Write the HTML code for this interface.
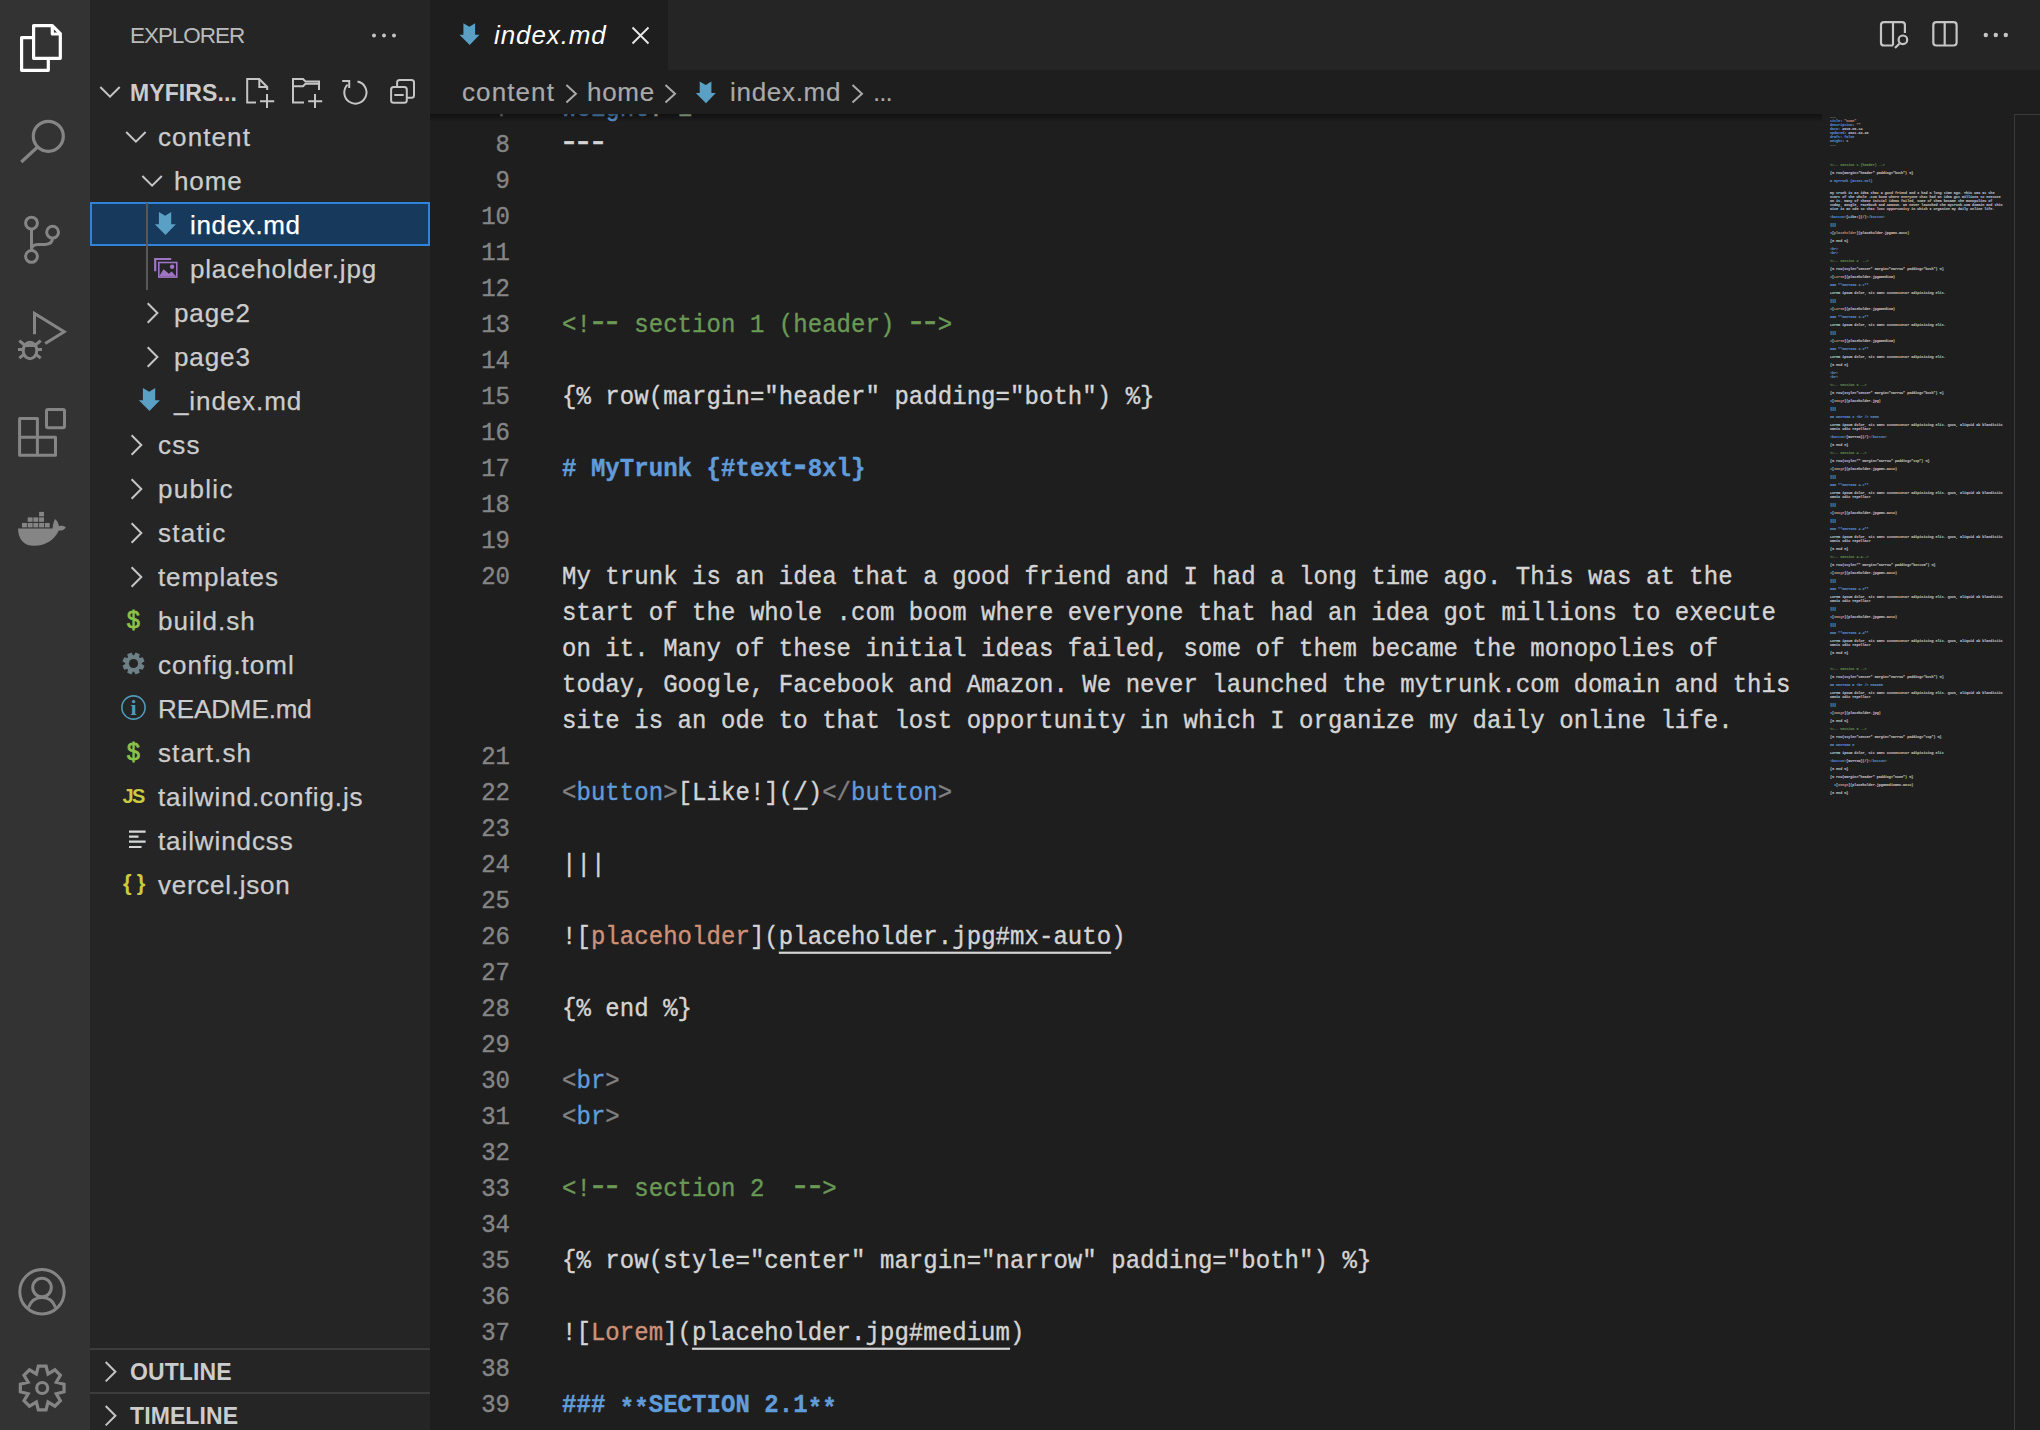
<!DOCTYPE html><html><head><meta charset="utf-8"><style>
html,body{margin:0;padding:0;}
body{width:2040px;height:1430px;overflow:hidden;background:#1e1e1e;position:relative;font-family:"Liberation Sans", sans-serif;}
.a{position:absolute;}
.t{position:absolute;white-space:pre;font-family:"Liberation Sans", sans-serif;}
.c{position:absolute;white-space:pre;font-family:"Liberation Mono", monospace;font-size:24px;line-height:36px;height:36px;color:#d4d4d4;letter-spacing:0.05px;-webkit-text-stroke:0.35px;transform-origin:0 24.5px;transform:scaleY(1.1);}
.ln{position:absolute;white-space:pre;font-family:"Liberation Mono", monospace;font-size:24px;line-height:36px;height:36px;color:#858585;-webkit-text-stroke:0.35px;transform-origin:0 24.5px;transform:scaleY(1.1);text-align:right;width:80px;left:430px;}
svg{position:absolute;left:0;top:0;overflow:visible;}
.u{text-decoration:underline;text-underline-offset:7px;text-decoration-thickness:2px;text-decoration-skip-ink:none;}
.st{position:relative;top:4px;}
.h{display:inline-block;transform:translateY(-1.5px) scale(1.4,1.3);}
</style></head><body>

<div class="a" style="left:0;top:0;width:90px;height:1430px;background:#333333"></div>
<div class="a" style="left:90px;top:0;width:340px;height:1430px;background:#252526"></div>
<div class="a" style="left:430px;top:0;width:1610px;height:70px;background:#252526"></div>
<div class="a" style="left:430px;top:0;width:238px;height:70px;background:#1e1e1e"></div>
<div class="a" style="left:430px;top:114px;width:1610px;height:1316px;overflow:hidden">
<div class="ln" style="left:0px;top:-22px">7</div><div class="c" style="left:132px;top:-22px"><span style="color:#619cda;">weight</span><span style="color:#d4d4d4;">: </span><span style="color:#b5cea8;">1</span></div>
<div class="ln" style="left:0px;top:14px">8</div><div class="c" style="left:132px;top:14px"><span style="color:#d4d4d4;"><span class="h">-</span><span class="h">-</span><span class="h">-</span></span></div>
<div class="ln" style="left:0px;top:50px">9</div>
<div class="ln" style="left:0px;top:86px">10</div>
<div class="ln" style="left:0px;top:122px">11</div>
<div class="ln" style="left:0px;top:158px">12</div>
<div class="ln" style="left:0px;top:194px">13</div><div class="c" style="left:132px;top:194px"><span style="color:#6a9955;">&lt;!<span class="h">-</span><span class="h">-</span> section 1 (header) <span class="h">-</span><span class="h">-</span>&gt;</span></div>
<div class="ln" style="left:0px;top:230px">14</div>
<div class="ln" style="left:0px;top:266px">15</div><div class="c" style="left:132px;top:266px"><span style="color:#d4d4d4;">{% row(margin=&quot;header&quot; padding=&quot;both&quot;) %}</span></div>
<div class="ln" style="left:0px;top:302px">16</div>
<div class="ln" style="left:0px;top:338px">17</div><div class="c" style="left:132px;top:338px"><span style="color:#619cda;font-weight:bold"># MyTrunk {#text<span class="h">-</span>8xl}</span></div>
<div class="ln" style="left:0px;top:374px">18</div>
<div class="ln" style="left:0px;top:410px">19</div>
<div class="ln" style="left:0px;top:446px">20</div><div class="c" style="left:132px;top:446px"><span style="color:#d4d4d4;">My trunk is an idea that a good friend and I had a long time ago. This was at the</span></div>
<div class="c" style="left:132px;top:482px"><span style="color:#d4d4d4;">start of the whole .com boom where everyone that had an idea got millions to execute</span></div>
<div class="c" style="left:132px;top:518px"><span style="color:#d4d4d4;">on it. Many of these initial ideas failed, some of them became the monopolies of</span></div>
<div class="c" style="left:132px;top:554px"><span style="color:#d4d4d4;">today, Google, Facebook and Amazon. We never launched the mytrunk.com domain and this</span></div>
<div class="c" style="left:132px;top:590px"><span style="color:#d4d4d4;">site is an ode to that lost opportunity in which I organize my daily online life.</span></div>
<div class="ln" style="left:0px;top:626px">21</div>
<div class="ln" style="left:0px;top:662px">22</div><div class="c" style="left:132px;top:662px"><span style="color:#808080;">&lt;</span><span style="color:#619cda;">button</span><span style="color:#808080;">&gt;</span><span style="color:#d4d4d4;">[Like!](</span><span class="u" style="color:#d4d4d4;">/</span><span style="color:#d4d4d4;">)</span><span style="color:#808080;">&lt;/</span><span style="color:#619cda;">button</span><span style="color:#808080;">&gt;</span></div>
<div class="ln" style="left:0px;top:698px">23</div>
<div class="ln" style="left:0px;top:734px">24</div><div class="c" style="left:132px;top:734px"><span style="color:#d4d4d4;">|||</span></div>
<div class="ln" style="left:0px;top:770px">25</div>
<div class="ln" style="left:0px;top:806px">26</div><div class="c" style="left:132px;top:806px"><span style="color:#d4d4d4;">![</span><span style="color:#ce9178;">placeholder</span><span style="color:#d4d4d4;">](</span><span class="u" style="color:#d4d4d4;">placeholder.jpg#mx-auto</span><span style="color:#d4d4d4;">)</span></div>
<div class="ln" style="left:0px;top:842px">27</div>
<div class="ln" style="left:0px;top:878px">28</div><div class="c" style="left:132px;top:878px"><span style="color:#d4d4d4;">{% end %}</span></div>
<div class="ln" style="left:0px;top:914px">29</div>
<div class="ln" style="left:0px;top:950px">30</div><div class="c" style="left:132px;top:950px"><span style="color:#808080;">&lt;</span><span style="color:#619cda;">br</span><span style="color:#808080;">&gt;</span></div>
<div class="ln" style="left:0px;top:986px">31</div><div class="c" style="left:132px;top:986px"><span style="color:#808080;">&lt;</span><span style="color:#619cda;">br</span><span style="color:#808080;">&gt;</span></div>
<div class="ln" style="left:0px;top:1022px">32</div>
<div class="ln" style="left:0px;top:1058px">33</div><div class="c" style="left:132px;top:1058px"><span style="color:#6a9955;">&lt;!<span class="h">-</span><span class="h">-</span> section 2  <span class="h">-</span><span class="h">-</span>&gt;</span></div>
<div class="ln" style="left:0px;top:1094px">34</div>
<div class="ln" style="left:0px;top:1130px">35</div><div class="c" style="left:132px;top:1130px"><span style="color:#d4d4d4;">{% row(style=&quot;center&quot; margin=&quot;narrow&quot; padding=&quot;both&quot;) %}</span></div>
<div class="ln" style="left:0px;top:1166px">36</div>
<div class="ln" style="left:0px;top:1202px">37</div><div class="c" style="left:132px;top:1202px"><span style="color:#d4d4d4;">![</span><span style="color:#ce9178;">Lorem</span><span style="color:#d4d4d4;">](</span><span class="u" style="color:#d4d4d4;">placeholder.jpg#medium</span><span style="color:#d4d4d4;">)</span></div>
<div class="ln" style="left:0px;top:1238px">38</div>
<div class="ln" style="left:0px;top:1274px">39</div><div class="c" style="left:132px;top:1274px"><span style="color:#619cda;font-weight:bold">### </span><span class="st" style="color:#619cda;font-weight:bold;">**</span><span style="color:#619cda;font-weight:bold">SECTION 2.1</span><span class="st" style="color:#619cda;font-weight:bold;">**</span></div>
</div>
<div class="a" style="left:430px;top:70px;width:1610px;height:44px;background:#1e1e1e"></div>
<div class="a" style="left:430px;top:114px;width:1392px;height:8px;background:linear-gradient(rgba(0,0,0,0.45),rgba(0,0,0,0))"></div>
<div class="t" style="left:130px;top:21px;font-size:22.5px;line-height:30px;color:#bbbbbb;letter-spacing:-1.05px">EXPLORER</div>
<div class="t" style="left:130px;top:78px;font-size:23px;line-height:30px;color:#cccccc;font-weight:bold;letter-spacing:0.1px">MYFIRS...</div>
<div class="a" style="left:90px;top:202px;width:340px;height:44px;background:#17395c;border:2px solid #3083da;box-sizing:border-box"></div>
<div class="a" style="left:146px;top:203px;width:2px;height:87px;background:#585858"></div>
<div class="t" style="left:158px;top:121px;font-size:26px;line-height:32px;color:#cccccc;letter-spacing:1.1px;-webkit-text-stroke:0.25px #cccccc">content</div>
<div class="t" style="left:174px;top:165px;font-size:26px;line-height:32px;color:#cccccc;letter-spacing:0.9px;-webkit-text-stroke:0.25px #cccccc">home</div>
<div class="t" style="left:190px;top:209px;font-size:26px;line-height:32px;color:#ffffff;letter-spacing:0.65px;-webkit-text-stroke:0.25px #ffffff">index.md</div>
<div class="t" style="left:190px;top:253px;font-size:26px;line-height:32px;color:#cccccc;letter-spacing:0.8px;-webkit-text-stroke:0.25px #cccccc">placeholder.jpg</div>
<div class="t" style="left:174px;top:297px;font-size:26px;line-height:32px;color:#cccccc;letter-spacing:0.9px;-webkit-text-stroke:0.25px #cccccc">page2</div>
<div class="t" style="left:174px;top:341px;font-size:26px;line-height:32px;color:#cccccc;letter-spacing:0.9px;-webkit-text-stroke:0.25px #cccccc">page3</div>
<div class="t" style="left:174px;top:385px;font-size:26px;line-height:32px;color:#cccccc;letter-spacing:0.9px;-webkit-text-stroke:0.25px #cccccc">_index.md</div>
<div class="t" style="left:158px;top:429px;font-size:26px;line-height:32px;color:#cccccc;letter-spacing:1.3px;-webkit-text-stroke:0.25px #cccccc">css</div>
<div class="t" style="left:158px;top:473px;font-size:26px;line-height:32px;color:#cccccc;letter-spacing:1.3px;-webkit-text-stroke:0.25px #cccccc">public</div>
<div class="t" style="left:158px;top:517px;font-size:26px;line-height:32px;color:#cccccc;letter-spacing:1.3px;-webkit-text-stroke:0.25px #cccccc">static</div>
<div class="t" style="left:158px;top:561px;font-size:26px;line-height:32px;color:#cccccc;letter-spacing:0.9px;-webkit-text-stroke:0.25px #cccccc">templates</div>
<div class="t" style="left:158px;top:605px;font-size:26px;line-height:32px;color:#cccccc;letter-spacing:1.0px;-webkit-text-stroke:0.25px #cccccc">build.sh</div>
<div class="t" style="left:127px;top:604px;font-size:23px;line-height:32px;color:#8dc149;font-weight:normal;-webkit-text-stroke:0.8px #8dc149">$</div>
<div class="t" style="left:158px;top:649px;font-size:26px;line-height:32px;color:#cccccc;letter-spacing:1.0px;-webkit-text-stroke:0.25px #cccccc">config.toml</div>
<div class="t" style="left:158px;top:693px;font-size:26px;line-height:32px;color:#cccccc;letter-spacing:-0.1px;-webkit-text-stroke:0.25px #cccccc">README.md</div>
<div class="t" style="left:130.5px;top:694px;font-family:'Liberation Serif',serif;font-size:22px;line-height:28px;color:#519aba;font-weight:bold">i</div>
<div class="t" style="left:158px;top:737px;font-size:26px;line-height:32px;color:#cccccc;letter-spacing:1.1px;-webkit-text-stroke:0.25px #cccccc">start.sh</div>
<div class="t" style="left:127px;top:736px;font-size:23px;line-height:32px;color:#8dc149;font-weight:normal;-webkit-text-stroke:0.8px #8dc149">$</div>
<div class="t" style="left:158px;top:781px;font-size:26px;line-height:32px;color:#cccccc;letter-spacing:0.9px;-webkit-text-stroke:0.25px #cccccc">tailwind.config.js</div>
<div class="t" style="left:122.5px;top:783px;font-size:20px;line-height:26px;color:#cbcb41;font-weight:bold;letter-spacing:-1.6px">JS</div>
<div class="t" style="left:158px;top:825px;font-size:26px;line-height:32px;color:#cccccc;letter-spacing:0.9px;-webkit-text-stroke:0.25px #cccccc">tailwindcss</div>
<div class="t" style="left:158px;top:869px;font-size:26px;line-height:32px;color:#cccccc;letter-spacing:0.75px;-webkit-text-stroke:0.25px #cccccc">vercel.json</div>
<div class="t" style="left:123px;top:868px;font-size:22px;line-height:30px;color:#cbcb41;font-weight:bold;letter-spacing:-0.5px">{ }</div>
<div class="a" style="left:90px;top:1348px;width:340px;height:2px;background:#3c3c3c"></div>
<div class="a" style="left:90px;top:1392px;width:340px;height:2px;background:#3c3c3c"></div>
<div class="t" style="left:130px;top:1357px;font-size:23px;line-height:30px;color:#cccccc;font-weight:bold;letter-spacing:0.1px">OUTLINE</div>
<div class="t" style="left:130px;top:1401px;font-size:23px;line-height:30px;color:#cccccc;font-weight:bold;letter-spacing:0.1px">TIMELINE</div>
<div class="t" style="left:494px;top:19px;font-size:26px;line-height:32px;color:#ffffff;font-style:italic;letter-spacing:0.9px">index.md</div>
<div class="t" style="left:462px;top:76px;font-size:26px;line-height:32px;color:#a9a9a9;letter-spacing:1.1px;-webkit-text-stroke:0.2px #a9a9a9">content</div>
<div class="t" style="left:587px;top:76px;font-size:26px;line-height:32px;color:#a9a9a9;letter-spacing:0.7px;-webkit-text-stroke:0.2px #a9a9a9">home</div>
<div class="t" style="left:730px;top:76px;font-size:26px;line-height:32px;color:#a9a9a9;letter-spacing:0.7px;-webkit-text-stroke:0.2px #a9a9a9">index.md</div>
<div class="t" style="left:873px;top:76px;font-size:26px;line-height:32px;color:#a9a9a9;letter-spacing:-1px">...</div>
<svg width="2040" height="1430" viewBox="0 0 2040 1430"><g fill="none" stroke="#ffffff" stroke-width="3.2" stroke-linejoin="round"><path d="M33.6,25.6 H52.3 L60.3,33.6 V58.3 H33.6 Z"/><path d="M52.3,25.6 V34 H60.3"/><path d="M33.6,37.6 H21.6 V70.3 H48.3 V58.3"/></g><g fill="none" stroke="#858585" stroke-width="3.2"><circle cx="48.3" cy="136.3" r="15"/><path d="M37.6,147 L21.3,162"/></g><g fill="none" stroke="#858585" stroke-width="3"><circle cx="31.5" cy="223.1" r="5.9"/><circle cx="52.6" cy="232.2" r="5.9"/><circle cx="31.5" cy="256.4" r="5.9"/><path d="M31.5,229 V250.5"/><path d="M31.5,250 C31.5,246 34,244.4 38,244.4 H45 C50,244.4 52.6,242 52.6,238.1"/></g><g fill="none" stroke="#858585" stroke-width="3" stroke-linejoin="miter"><path d="M34.5,334.3 V313.5 L64.2,331.8 L45.2,343.5"/><ellipse cx="30" cy="350.5" rx="6.8" ry="8.2"/><path d="M23.5,345.5 H36.5"/><path d="M18,349.4 H23 M37,349.4 H42"/><path d="M19.3,340.6 L24.5,345 M40.7,340.6 L35.5,345 M19.3,358.2 L24.5,354 M40.7,358.2 L35.5,354"/></g><g fill="none" stroke="#858585" stroke-width="3" stroke-linejoin="round"><path d="M19.6,418.5 H37.4 V437.3 H55.5 V455.2 H19.6 Z"/><path d="M19.6,437.3 H37.4 V455.2"/><rect x="46.5" y="409.5" width="18" height="18.2" rx="1.5"/></g><g fill="#858585"><rect x="22.0" y="523" width="4.9" height="4.4"/><rect x="27.7" y="523" width="4.9" height="4.4"/><rect x="33.4" y="523" width="4.9" height="4.4"/><rect x="39.1" y="523" width="4.9" height="4.4"/><rect x="44.8" y="523" width="4.9" height="4.4"/><rect x="27.7" y="517.4" width="4.9" height="4.4"/><rect x="33.4" y="517.4" width="4.9" height="4.4"/><rect x="39.1" y="517.4" width="4.9" height="4.4"/><rect x="39.1" y="511.9" width="4.9" height="4.4"/><path d="M18,528.4 H52.5 C53,526 53,523 55,519 C58,521.5 58.5,524 59,526.2 C61.5,525.5 64,525.8 65.8,527.4 C64,530 61.5,530.6 58.8,530.4 C55,539 46,545.8 34,545.8 C24,545.8 18.2,539 18,528.4 Z"/></g><g fill="none" stroke="#858585" stroke-width="3"><circle cx="42" cy="1291.7" r="22.2"/><circle cx="42" cy="1287.5" r="9.3"/><path d="M28.5,1307.5 C31,1300.5 36,1297.5 42,1297.5 C48,1297.5 53,1300.5 55.5,1307.5"/></g><g fill="none" stroke="#858585" stroke-width="3.2" stroke-linejoin="miter"><polygon points="38.35,1366.14 46.05,1366.14 48.02,1373.96 54.93,1369.81 60.39,1375.27 56.24,1382.18 64.06,1384.15 64.06,1391.85 56.24,1393.82 60.39,1400.73 54.93,1406.19 48.02,1402.04 46.05,1409.86 38.35,1409.86 36.38,1402.04 29.47,1406.19 24.01,1400.73 28.16,1393.82 20.34,1391.85 20.34,1384.15 28.16,1382.18 24.01,1375.27 29.47,1369.81 36.38,1373.96"/><circle cx="42.2" cy="1388" r="5.5"/></g><g fill="#c5c5c5"><circle cx="374" cy="35.5" r="2"/><circle cx="384" cy="35.5" r="2"/><circle cx="394" cy="35.5" r="2"/></g><path d="M100.3,87 L110.0,96.7 L119.69999999999999,87" fill="none" stroke="#c5c5c5" stroke-width="2"/><g fill="none" stroke="#c5c5c5" stroke-width="2"><path d="M256,102.5 H247.2 V79 H259.3 L267.2,87 V90"/><path d="M259.3,79 V87 H267.2"/><path d="M267,94 V108 M260,101.2 H274.2"/><path d="M304,102.5 H293 V79 H303 L305.5,81.5 H319 V90"/><path d="M293,86.2 H303 L305.5,83.7 H319"/><path d="M315,94 V108 M308.2,101.2 H322.2"/><path d="M357.5,81.6 A11.1,11.1 0 1 1 347.6,84.6"/><path d="M342.2,80.9 H349.2 V87.9"/><rect x="397.1" y="80" width="16.9" height="17.7" rx="2.5"/></g><rect x="391.1" y="87" width="15.7" height="15.7" rx="2.5" fill="#252526" stroke="#c5c5c5" stroke-width="2"/><path d="M394.3,95 H403.7" stroke="#c5c5c5" stroke-width="2"/><path d="M126.2,132 L135.9,141.7 L145.6,132" fill="none" stroke="#c5c5c5" stroke-width="2"/><path d="M142.4,176 L152.1,185.7 L161.8,176" fill="none" stroke="#c5c5c5" stroke-width="2"/><polygon points="158.9,212.0 165.2,215.7 171.2,212.0 171.2,224.2 175.9,224.2 165.5,235.0 154.8,224.2 158.9,224.2" fill="#5a9fc4"/><g fill="none" stroke="#a074c4"><path d="M155.2,271.2 V259 H171.2" stroke-width="2.2"/><rect x="158.8" y="262.5" width="18" height="14.6" stroke-width="1.6"/></g><g fill="#a074c4"><path d="M159,276.5 L163.5,269.2 L169,273.7 L171.6,271.5 L176.3,276.5 Z"/><circle cx="172.1" cy="266.8" r="2.2"/></g><path d="M147.7,303.3 L157.39999999999998,313.0 L147.7,322.7" fill="none" stroke="#c5c5c5" stroke-width="2"/><path d="M147.7,347.3 L157.39999999999998,357.0 L147.7,366.7" fill="none" stroke="#c5c5c5" stroke-width="2"/><polygon points="142.9,388.0 149.2,391.7 155.2,388.0 155.2,400.2 159.9,400.2 149.5,411.0 138.8,400.2 142.9,400.2" fill="#5a9fc4"/><path d="M131.6,435.3 L141.29999999999998,445.0 L131.6,454.7" fill="none" stroke="#c5c5c5" stroke-width="2"/><path d="M131.6,479.3 L141.29999999999998,489.0 L131.6,498.7" fill="none" stroke="#c5c5c5" stroke-width="2"/><path d="M131.6,523.3 L141.29999999999998,533.0 L131.6,542.6999999999999" fill="none" stroke="#c5c5c5" stroke-width="2"/><path d="M131.6,567.3 L141.29999999999998,577.0 L131.6,586.6999999999999" fill="none" stroke="#c5c5c5" stroke-width="2"/><polygon points="141.35,660.81 144.48,661.27 144.48,665.73 141.35,666.19 140.95,667.15 142.84,669.69 139.69,672.84 137.15,670.95 136.19,671.35 135.73,674.48 131.27,674.48 130.81,671.35 129.85,670.95 127.31,672.84 124.16,669.69 126.05,667.15 125.65,666.19 122.52,665.73 122.52,661.27 125.65,660.81 126.05,659.85 124.16,657.31 127.31,654.16 129.85,656.05 130.81,655.65 131.27,652.52 135.73,652.52 136.19,655.65 137.15,656.05 139.69,654.16 142.84,657.31 140.95,659.85" fill="#6d8086" transform="rotate(22.5 133.5 663.5)"/><circle cx="133.5" cy="663.5" r="4.6" fill="#252526"/><circle cx="133.5" cy="707.5" r="11.6" fill="none" stroke="#519aba" stroke-width="1.6"/><g stroke="#d4d7d6" stroke-width="2.2"><path d="M129,831.6 H145.6 M129,836.7 H138.5 M129,841.7 H145.6 M129,847 H141.5"/></g><path d="M105.7,1362 L115.4,1371.7 L105.7,1381.4" fill="none" stroke="#c5c5c5" stroke-width="2"/><path d="M105.7,1406 L115.4,1415.7 L105.7,1425.4" fill="none" stroke="#c5c5c5" stroke-width="2"/><polygon points="463.4,23.2 469.4,26.7 475.1,23.2 475.1,34.8 479.5,34.8 469.7,45.0 459.5,34.8 463.4,34.8" fill="#5a9fc4"/><path d="M632.5,27.5 L648.5,43.5 M648.5,27.5 L632.5,43.5" stroke="#e8e8e8" stroke-width="1.9"/><g fill="none" stroke="#c5c5c5" stroke-width="2.2"><path d="M1904.9,33 V25 Q1904.9,22.2 1902,22.2 H1884 Q1881,22.2 1881,25 V42.7 Q1881,45.5 1884,45.5 H1893 M1893,22.2 V45.5"/><circle cx="1902.9" cy="39.8" r="4.3"/><path d="M1899.6,43.5 L1895,48"/><rect x="1933.3" y="22.2" width="23.3" height="23.3" rx="3"/><path d="M1944.7,22.2 V45.5"/></g><g fill="#c5c5c5"><circle cx="1985.8" cy="35" r="2.2"/><circle cx="1995.8" cy="35" r="2.2"/><circle cx="2005.8" cy="35" r="2.2"/></g><path d="M566.4,85 L575.9,93.8 L566.4,102.6" fill="none" stroke="#a9a9a9" stroke-width="2"/><path d="M665.5,85 L675.0,93.8 L665.5,102.6" fill="none" stroke="#a9a9a9" stroke-width="2"/><path d="M852.5,85 L862.0,93.8 L852.5,102.6" fill="none" stroke="#a9a9a9" stroke-width="2"/><polygon points="699.7,81.5 705.7,85.0 711.4,81.5 711.4,93.1 715.8,93.1 706.0,103.3 695.8,93.1 699.7,93.1" fill="#5a9fc4"/></svg>
<div class="a" style="left:1830px;top:114.5px;width:1400px;height:6000px;transform-origin:0 0;transform:scale(0.14095);font-family:&quot;Liberation Mono&quot;,monospace;font-size:24px;font-weight:bold;-webkit-text-stroke:1px currentColor;opacity:0.8"><div style="position:absolute;left:0;top:0.00px;white-space:pre;height:28px;line-height:28px"><span style="color:#d4d4d4">---</span></div><div style="position:absolute;left:0;top:28.38px;white-space:pre;height:28px;line-height:28px"><span style="color:#619cda">title</span><span style="color:#d4d4d4">: </span><span style="color:#ce9178">&quot;Home&quot;</span></div><div style="position:absolute;left:0;top:56.76px;white-space:pre;height:28px;line-height:28px"><span style="color:#619cda">description</span><span style="color:#d4d4d4">: </span><span style="color:#ce9178">&quot;&quot;</span></div><div style="position:absolute;left:0;top:85.13px;white-space:pre;height:28px;line-height:28px"><span style="color:#619cda">date</span><span style="color:#d4d4d4">: </span><span style="color:#d4d4d4">2018-09-14</span></div><div style="position:absolute;left:0;top:113.51px;white-space:pre;height:28px;line-height:28px"><span style="color:#619cda">updated</span><span style="color:#d4d4d4">: </span><span style="color:#d4d4d4">2021-02-20</span></div><div style="position:absolute;left:0;top:141.89px;white-space:pre;height:28px;line-height:28px"><span style="color:#619cda">draft</span><span style="color:#d4d4d4">: </span><span style="color:#619cda">false</span></div><div style="position:absolute;left:0;top:170.27px;white-space:pre;height:28px;line-height:28px"><span style="color:#619cda">weight</span><span style="color:#d4d4d4">: </span><span style="color:#b5cea8">1</span></div><div style="position:absolute;left:0;top:198.65px;white-space:pre;height:28px;line-height:28px"><span style="color:#d4d4d4">---</span></div><div style="position:absolute;left:0;top:340.54px;white-space:pre;height:28px;line-height:28px"><span style="color:#6a9955">&lt;!-- section 1 (header) --&gt;</span></div><div style="position:absolute;left:0;top:397.30px;white-space:pre;height:28px;line-height:28px"><span style="color:#d4d4d4">{% row(margin=&quot;header&quot; padding=&quot;both&quot;) %}</span></div><div style="position:absolute;left:0;top:454.05px;white-space:pre;height:28px;line-height:28px"><span style="color:#619cda"># MyTrunk {#text-8xl}</span></div><div style="position:absolute;left:0;top:539.19px;white-space:pre;height:28px;line-height:28px"><span style="color:#d4d4d4">My trunk is an idea that a good friend and I had a long time ago. This was at the</span></div><div style="position:absolute;left:0;top:567.57px;white-space:pre;height:28px;line-height:28px"><span style="color:#d4d4d4">start of the whole .com boom where everyone that had an idea got millions to execute</span></div><div style="position:absolute;left:0;top:595.94px;white-space:pre;height:28px;line-height:28px"><span style="color:#d4d4d4">on it. Many of these initial ideas failed, some of them became the monopolies of</span></div><div style="position:absolute;left:0;top:624.32px;white-space:pre;height:28px;line-height:28px"><span style="color:#d4d4d4">today, Google, Facebook and Amazon. We never launched the mytrunk.com domain and this</span></div><div style="position:absolute;left:0;top:652.70px;white-space:pre;height:28px;line-height:28px"><span style="color:#d4d4d4">site is an ode to that lost opportunity in which I organize my daily online life.</span></div><div style="position:absolute;left:0;top:709.46px;white-space:pre;height:28px;line-height:28px"><span style="color:#808080">&lt;</span><span style="color:#619cda">button</span><span style="color:#808080">&gt;</span><span style="color:#d4d4d4">[Like!](/)</span><span style="color:#808080">&lt;/</span><span style="color:#619cda">button</span><span style="color:#808080">&gt;</span></div><div style="position:absolute;left:0;top:766.21px;white-space:pre;height:28px;line-height:28px"><span style="color:#d4d4d4">|||</span></div><div style="position:absolute;left:0;top:822.97px;white-space:pre;height:28px;line-height:28px"><span style="color:#d4d4d4">![</span><span style="color:#ce9178">placeholder</span><span style="color:#d4d4d4">](placeholder.jpg#mx-auto)</span></div><div style="position:absolute;left:0;top:879.73px;white-space:pre;height:28px;line-height:28px"><span style="color:#d4d4d4">{% end %}</span></div><div style="position:absolute;left:0;top:936.48px;white-space:pre;height:28px;line-height:28px"><span style="color:#808080">&lt;</span><span style="color:#619cda">br</span><span style="color:#808080">&gt;</span></div><div style="position:absolute;left:0;top:964.86px;white-space:pre;height:28px;line-height:28px"><span style="color:#808080">&lt;</span><span style="color:#619cda">br</span><span style="color:#808080">&gt;</span></div><div style="position:absolute;left:0;top:1021.62px;white-space:pre;height:28px;line-height:28px"><span style="color:#6a9955">&lt;!-- section 2  --&gt;</span></div><div style="position:absolute;left:0;top:1078.38px;white-space:pre;height:28px;line-height:28px"><span style="color:#d4d4d4">{% row(style=&quot;center&quot; margin=&quot;narrow&quot; padding=&quot;both&quot;) %}</span></div><div style="position:absolute;left:0;top:1135.13px;white-space:pre;height:28px;line-height:28px"><span style="color:#d4d4d4">![</span><span style="color:#ce9178">Lorem</span><span style="color:#d4d4d4">](placeholder.jpg#medium)</span></div><div style="position:absolute;left:0;top:1191.89px;white-space:pre;height:28px;line-height:28px"><span style="color:#619cda">### **SECTION 2.1**</span></div><div style="position:absolute;left:0;top:1248.65px;white-space:pre;height:28px;line-height:28px"><span style="color:#d4d4d4">Lorem ipsum dolor, sit amet consectetur adipisicing elit.</span></div><div style="position:absolute;left:0;top:1305.40px;white-space:pre;height:28px;line-height:28px"><span style="color:#d4d4d4">|||</span></div><div style="position:absolute;left:0;top:1362.16px;white-space:pre;height:28px;line-height:28px"><span style="color:#d4d4d4">![</span><span style="color:#ce9178">Lorem</span><span style="color:#d4d4d4">](placeholder.jpg#medium)</span></div><div style="position:absolute;left:0;top:1418.92px;white-space:pre;height:28px;line-height:28px"><span style="color:#619cda">### **SECTION 2.2**</span></div><div style="position:absolute;left:0;top:1475.67px;white-space:pre;height:28px;line-height:28px"><span style="color:#d4d4d4">Lorem ipsum dolor, sit amet consectetur adipisicing elit.</span></div><div style="position:absolute;left:0;top:1532.43px;white-space:pre;height:28px;line-height:28px"><span style="color:#d4d4d4">|||</span></div><div style="position:absolute;left:0;top:1589.19px;white-space:pre;height:28px;line-height:28px"><span style="color:#d4d4d4">![</span><span style="color:#ce9178">Lorem</span><span style="color:#d4d4d4">](placeholder.jpg#medium)</span></div><div style="position:absolute;left:0;top:1645.94px;white-space:pre;height:28px;line-height:28px"><span style="color:#619cda">### **SECTION 2.3**</span></div><div style="position:absolute;left:0;top:1702.70px;white-space:pre;height:28px;line-height:28px"><span style="color:#d4d4d4">Lorem ipsum dolor, sit amet consectetur adipisicing elit.</span></div><div style="position:absolute;left:0;top:1759.46px;white-space:pre;height:28px;line-height:28px"><span style="color:#d4d4d4">{% end %}</span></div><div style="position:absolute;left:0;top:1816.21px;white-space:pre;height:28px;line-height:28px"><span style="color:#808080">&lt;</span><span style="color:#619cda">br</span><span style="color:#808080">&gt;</span></div><div style="position:absolute;left:0;top:1844.59px;white-space:pre;height:28px;line-height:28px"><span style="color:#808080">&lt;</span><span style="color:#619cda">br</span><span style="color:#808080">&gt;</span></div><div style="position:absolute;left:0;top:1901.35px;white-space:pre;height:28px;line-height:28px"><span style="color:#6a9955">&lt;!-- section 3 --&gt;</span></div><div style="position:absolute;left:0;top:1958.10px;white-space:pre;height:28px;line-height:28px"><span style="color:#d4d4d4">{% row(style=&quot;center&quot; margin=&quot;narrow&quot; padding=&quot;both&quot;) %}</span></div><div style="position:absolute;left:0;top:2014.86px;white-space:pre;height:28px;line-height:28px"><span style="color:#d4d4d4">![</span><span style="color:#ce9178">Image</span><span style="color:#d4d4d4">](placeholder.jpg)</span></div><div style="position:absolute;left:0;top:2071.62px;white-space:pre;height:28px;line-height:28px"><span style="color:#d4d4d4">|||</span></div><div style="position:absolute;left:0;top:2128.37px;white-space:pre;height:28px;line-height:28px"><span style="color:#619cda">## SECTION 3 </span><span style="color:#619cda">&lt;br /&gt;</span><span style="color:#619cda"> HERO</span></div><div style="position:absolute;left:0;top:2185.13px;white-space:pre;height:28px;line-height:28px"><span style="color:#d4d4d4">Lorem ipsum dolor, sit amet consectetur adipisicing elit. Quos, aliquid ab blanditiis</span></div><div style="position:absolute;left:0;top:2213.51px;white-space:pre;height:28px;line-height:28px"><span style="color:#d4d4d4">omnis odio repellat?</span></div><div style="position:absolute;left:0;top:2270.27px;white-space:pre;height:28px;line-height:28px"><span style="color:#808080">&lt;</span><span style="color:#619cda">button</span><span style="color:#808080">&gt;</span><span style="color:#d4d4d4">[BUTTON](/)</span><span style="color:#808080">&lt;/</span><span style="color:#619cda">button</span><span style="color:#808080">&gt;</span></div><div style="position:absolute;left:0;top:2327.02px;white-space:pre;height:28px;line-height:28px"><span style="color:#d4d4d4">{% end %}</span></div><div style="position:absolute;left:0;top:2383.78px;white-space:pre;height:28px;line-height:28px"><span style="color:#6a9955">&lt;!-- section 4 --&gt;</span></div><div style="position:absolute;left:0;top:2440.54px;white-space:pre;height:28px;line-height:28px"><span style="color:#d4d4d4">{% row(style=&quot;&quot; margin=&quot;narrow&quot; padding=&quot;top&quot;) %}</span></div><div style="position:absolute;left:0;top:2497.29px;white-space:pre;height:28px;line-height:28px"><span style="color:#d4d4d4">![</span><span style="color:#ce9178">Image</span><span style="color:#d4d4d4">](placeholder.jpg#mx-auto)</span></div><div style="position:absolute;left:0;top:2554.05px;white-space:pre;height:28px;line-height:28px"><span style="color:#d4d4d4">|||</span></div><div style="position:absolute;left:0;top:2610.81px;white-space:pre;height:28px;line-height:28px"><span style="color:#619cda">### **SECTION 4.1**</span></div><div style="position:absolute;left:0;top:2667.56px;white-space:pre;height:28px;line-height:28px"><span style="color:#d4d4d4">Lorem ipsum dolor, sit amet consectetur adipisicing elit. Quos, aliquid ab blanditiis</span></div><div style="position:absolute;left:0;top:2695.94px;white-space:pre;height:28px;line-height:28px"><span style="color:#d4d4d4">omnis odio repellat?</span></div><div style="position:absolute;left:0;top:2752.70px;white-space:pre;height:28px;line-height:28px"><span style="color:#d4d4d4">|||</span></div><div style="position:absolute;left:0;top:2809.45px;white-space:pre;height:28px;line-height:28px"><span style="color:#d4d4d4">![</span><span style="color:#ce9178">Image</span><span style="color:#d4d4d4">](placeholder.jpg#mx-auto)</span></div><div style="position:absolute;left:0;top:2866.21px;white-space:pre;height:28px;line-height:28px"><span style="color:#d4d4d4">|||</span></div><div style="position:absolute;left:0;top:2922.97px;white-space:pre;height:28px;line-height:28px"><span style="color:#619cda">### **SECTION 4.2**</span></div><div style="position:absolute;left:0;top:2979.72px;white-space:pre;height:28px;line-height:28px"><span style="color:#d4d4d4">Lorem ipsum dolor, sit amet consectetur adipisicing elit. Quos, aliquid ab blanditiis</span></div><div style="position:absolute;left:0;top:3008.10px;white-space:pre;height:28px;line-height:28px"><span style="color:#d4d4d4">omnis odio repellat?</span></div><div style="position:absolute;left:0;top:3064.86px;white-space:pre;height:28px;line-height:28px"><span style="color:#d4d4d4">{% end %}</span></div><div style="position:absolute;left:0;top:3121.62px;white-space:pre;height:28px;line-height:28px"><span style="color:#6a9955">&lt;!-- section 4-2--&gt;</span></div><div style="position:absolute;left:0;top:3178.37px;white-space:pre;height:28px;line-height:28px"><span style="color:#d4d4d4">{% row(style=&quot;&quot; margin=&quot;narrow&quot; padding=&quot;bottom&quot;) %}</span></div><div style="position:absolute;left:0;top:3235.13px;white-space:pre;height:28px;line-height:28px"><span style="color:#d4d4d4">![</span><span style="color:#ce9178">Image</span><span style="color:#d4d4d4">](placeholder.jpg#mx-auto)</span></div><div style="position:absolute;left:0;top:3291.89px;white-space:pre;height:28px;line-height:28px"><span style="color:#d4d4d4">|||</span></div><div style="position:absolute;left:0;top:3348.64px;white-space:pre;height:28px;line-height:28px"><span style="color:#619cda">### **SECTION 4.3**</span></div><div style="position:absolute;left:0;top:3405.40px;white-space:pre;height:28px;line-height:28px"><span style="color:#d4d4d4">Lorem ipsum dolor, sit amet consectetur adipisicing elit. Quos, aliquid ab blanditiis</span></div><div style="position:absolute;left:0;top:3433.78px;white-space:pre;height:28px;line-height:28px"><span style="color:#d4d4d4">omnis odio repellat?</span></div><div style="position:absolute;left:0;top:3490.53px;white-space:pre;height:28px;line-height:28px"><span style="color:#d4d4d4">|||</span></div><div style="position:absolute;left:0;top:3547.29px;white-space:pre;height:28px;line-height:28px"><span style="color:#d4d4d4">![</span><span style="color:#ce9178">Image</span><span style="color:#d4d4d4">](placeholder.jpg#mx-auto)</span></div><div style="position:absolute;left:0;top:3604.05px;white-space:pre;height:28px;line-height:28px"><span style="color:#d4d4d4">|||</span></div><div style="position:absolute;left:0;top:3660.80px;white-space:pre;height:28px;line-height:28px"><span style="color:#619cda">### **SECTION 4.4**</span></div><div style="position:absolute;left:0;top:3717.56px;white-space:pre;height:28px;line-height:28px"><span style="color:#d4d4d4">Lorem ipsum dolor, sit amet consectetur adipisicing elit. Quos, aliquid ab blanditiis</span></div><div style="position:absolute;left:0;top:3745.94px;white-space:pre;height:28px;line-height:28px"><span style="color:#d4d4d4">omnis odio repellat?</span></div><div style="position:absolute;left:0;top:3802.70px;white-space:pre;height:28px;line-height:28px"><span style="color:#d4d4d4">{% end %}</span></div><div style="position:absolute;left:0;top:3916.21px;white-space:pre;height:28px;line-height:28px"><span style="color:#6a9955">&lt;!-- section 5 --&gt;</span></div><div style="position:absolute;left:0;top:3972.97px;white-space:pre;height:28px;line-height:28px"><span style="color:#d4d4d4">{% row(style=&quot;center&quot; margin=&quot;narrow&quot; padding=&quot;both&quot;) %}</span></div><div style="position:absolute;left:0;top:4029.72px;white-space:pre;height:28px;line-height:28px"><span style="color:#619cda">## SECTION 5 &lt;br /&gt; HEADER</span></div><div style="position:absolute;left:0;top:4086.48px;white-space:pre;height:28px;line-height:28px"><span style="color:#d4d4d4">Lorem ipsum dolor, sit amet consectetur adipisicing elit. Quos, aliquid ab blanditiis</span></div><div style="position:absolute;left:0;top:4114.86px;white-space:pre;height:28px;line-height:28px"><span style="color:#d4d4d4">omnis odio repellat?</span></div><div style="position:absolute;left:0;top:4171.61px;white-space:pre;height:28px;line-height:28px"><span style="color:#d4d4d4">|||</span></div><div style="position:absolute;left:0;top:4228.37px;white-space:pre;height:28px;line-height:28px"><span style="color:#d4d4d4">![</span><span style="color:#ce9178">Image</span><span style="color:#d4d4d4">](placeholder.jpg)</span></div><div style="position:absolute;left:0;top:4285.13px;white-space:pre;height:28px;line-height:28px"><span style="color:#d4d4d4">{% end %}</span></div><div style="position:absolute;left:0;top:4341.88px;white-space:pre;height:28px;line-height:28px"><span style="color:#6a9955">&lt;!-- section 6 --&gt;</span></div><div style="position:absolute;left:0;top:4398.64px;white-space:pre;height:28px;line-height:28px"><span style="color:#d4d4d4">{% row(style=&quot;center&quot; margin=&quot;narrow&quot; padding=&quot;top&quot;) %}</span></div><div style="position:absolute;left:0;top:4455.40px;white-space:pre;height:28px;line-height:28px"><span style="color:#619cda">## SECTION 6</span></div><div style="position:absolute;left:0;top:4512.15px;white-space:pre;height:28px;line-height:28px"><span style="color:#d4d4d4">Lorem ipsum dolor, sit amet consectetur adipisicing elit</span></div><div style="position:absolute;left:0;top:4568.91px;white-space:pre;height:28px;line-height:28px"><span style="color:#808080">&lt;</span><span style="color:#619cda">button</span><span style="color:#808080">&gt;</span><span style="color:#d4d4d4">[BUTTON](/)</span><span style="color:#808080">&lt;/</span><span style="color:#619cda">button</span><span style="color:#808080">&gt;</span></div><div style="position:absolute;left:0;top:4625.67px;white-space:pre;height:28px;line-height:28px"><span style="color:#d4d4d4">{% end %}</span></div><div style="position:absolute;left:0;top:4682.42px;white-space:pre;height:28px;line-height:28px"><span style="color:#d4d4d4">{% row(margin=&quot;header&quot; padding=&quot;none&quot;) %}</span></div><div style="position:absolute;left:0;top:4739.18px;white-space:pre;height:28px;line-height:28px"><span style="color:#d4d4d4">  </span><span style="color:#d4d4d4">![</span><span style="color:#ce9178">Image</span><span style="color:#d4d4d4">](placeholder.jpg#mediumMx-auto)</span></div><div style="position:absolute;left:0;top:4795.94px;white-space:pre;height:28px;line-height:28px"><span style="color:#d4d4d4">{% end %}</span></div></div>
<div class="a" style="left:2014px;top:114px;width:26px;height:1316px;border-left:1px solid #3a3a3a;border-top:1px solid #3a3a3a;box-sizing:border-box"></div>
</body></html>
